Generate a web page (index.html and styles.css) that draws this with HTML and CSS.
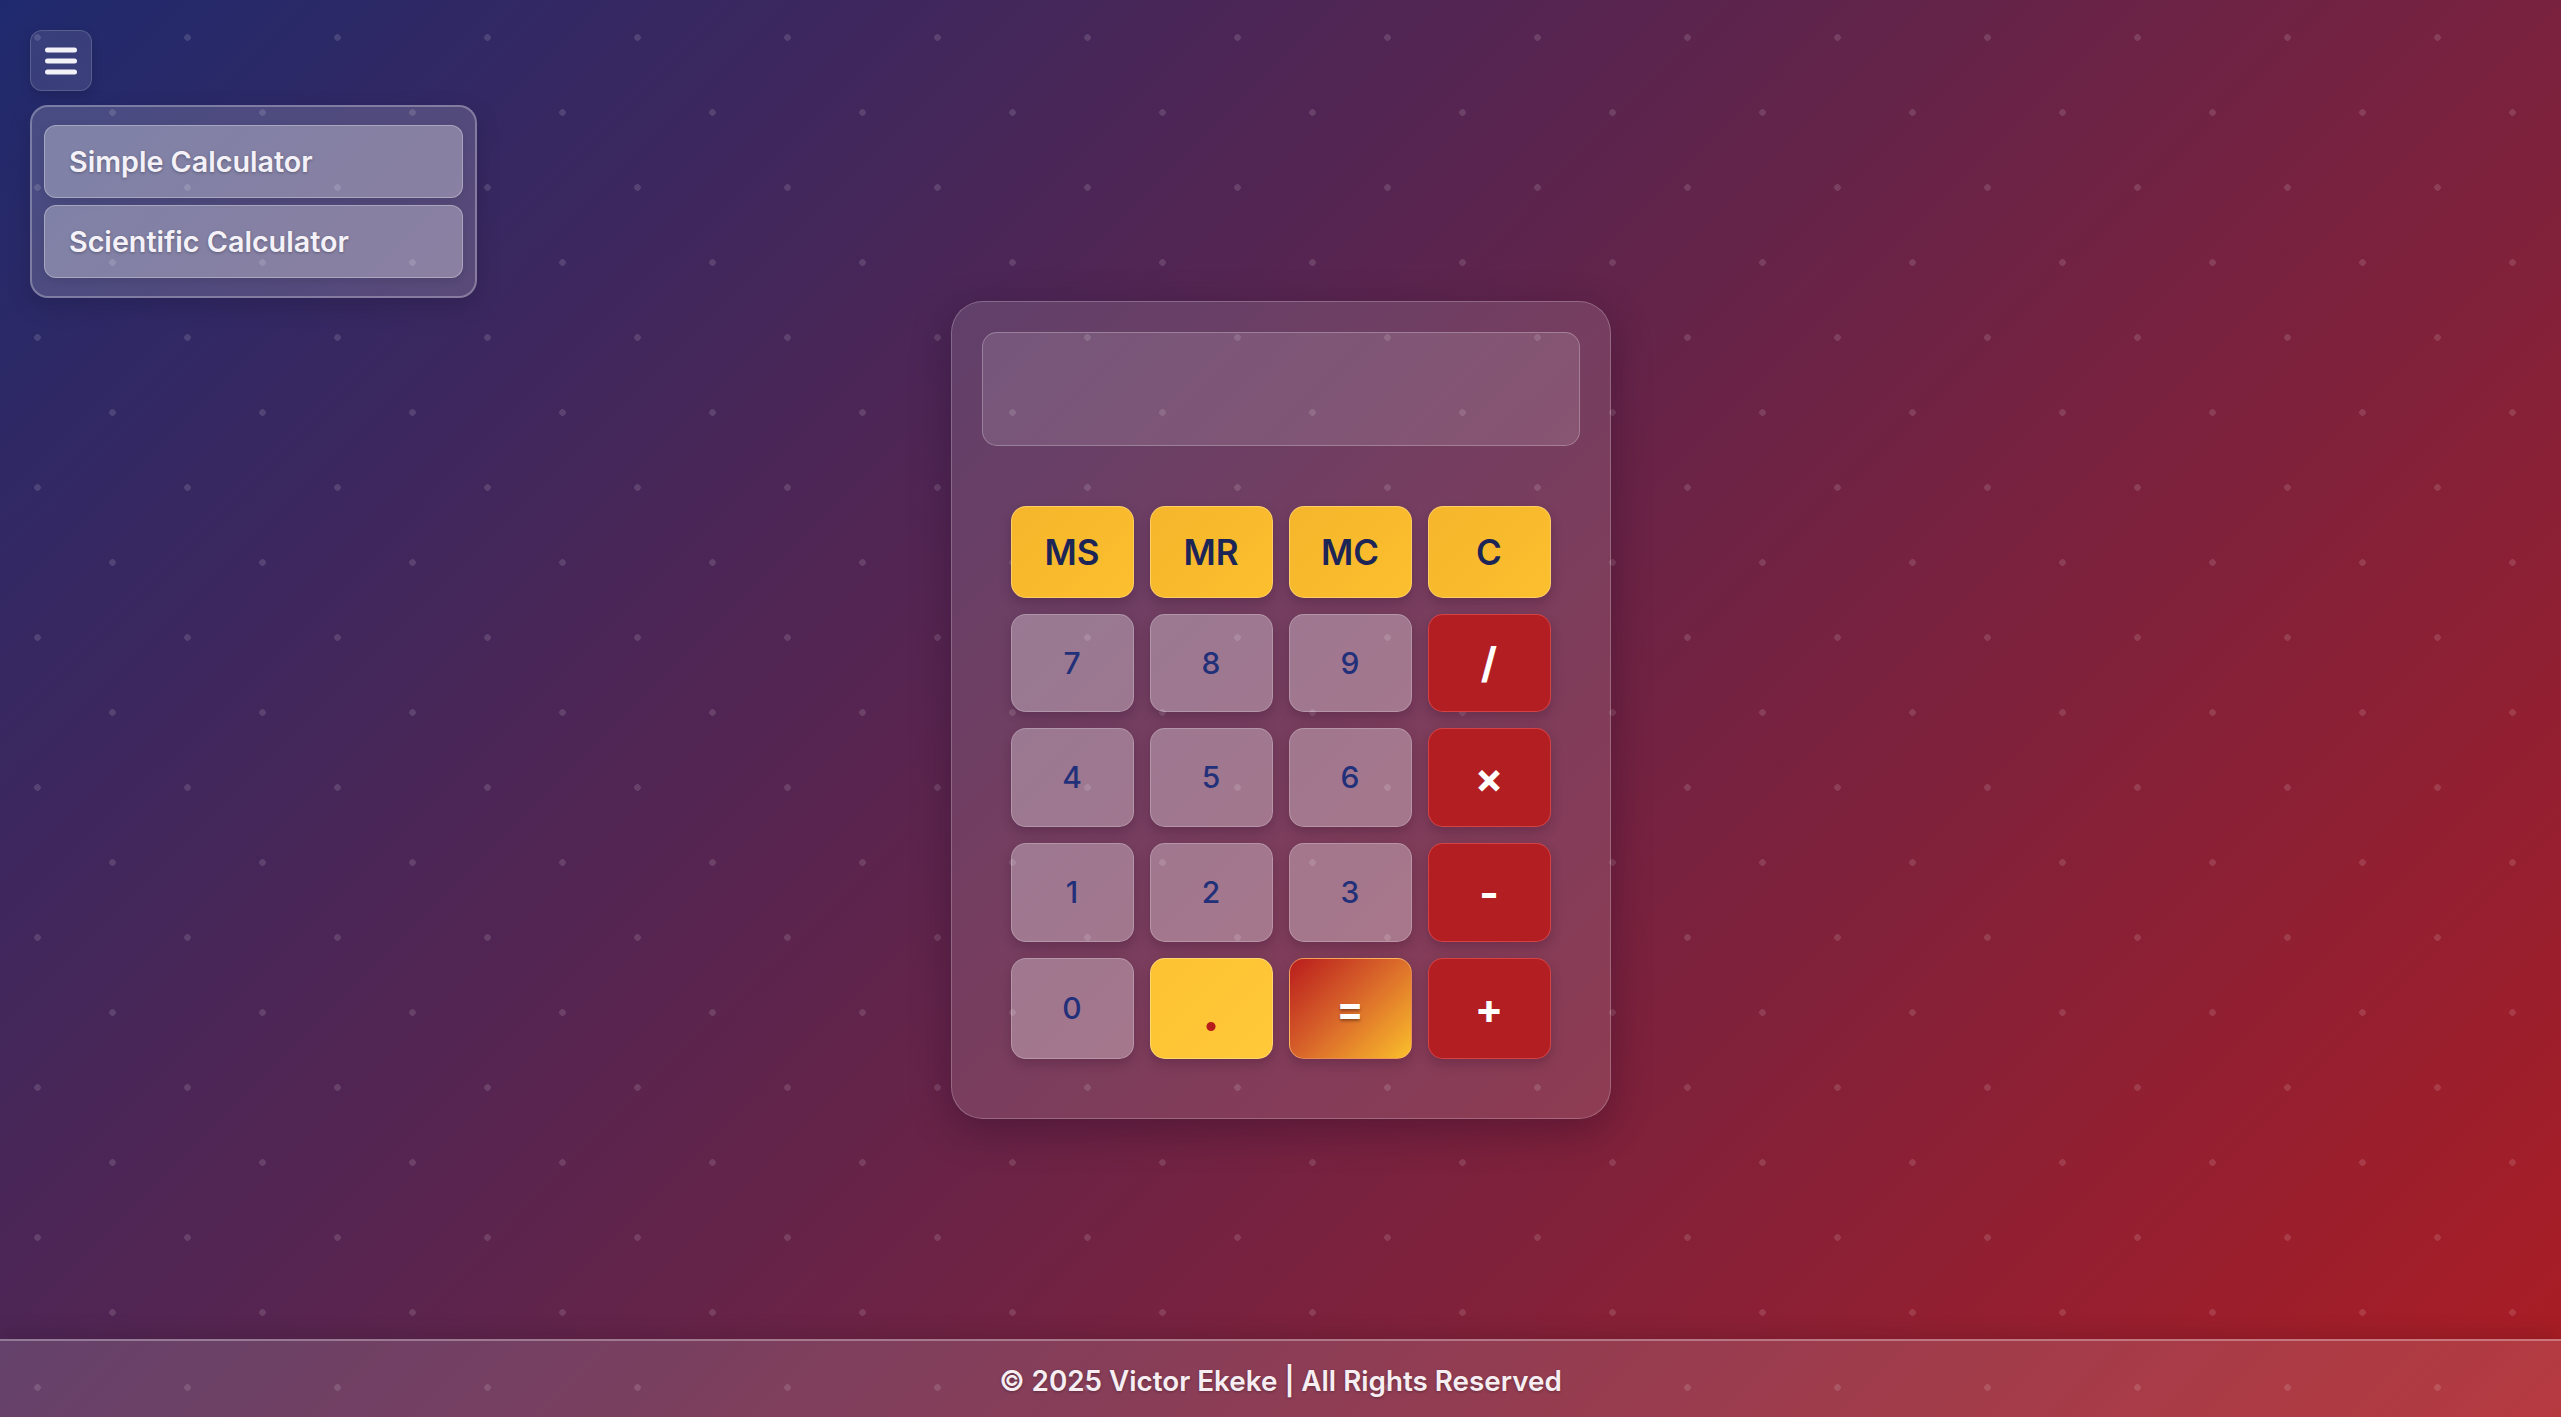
FILE: index.html
```html
<!DOCTYPE html>
<html lang="en">
<head>
<meta charset="utf-8">
<title>Simple Calculator</title>
<link rel="stylesheet" href="styles.css">
</head>
<body>
<nav class="nav">
  <button class="menu-toggle" aria-label="Menu">
    <svg class="bars" width="32" height="28" viewBox="0 0 32 28">
      <rect x="0" y="0.5" width="32" height="5" rx="2.5"/>
      <rect x="0" y="11.5" width="32" height="5" rx="2.5"/>
      <rect x="0" y="22.5" width="32" height="5" rx="2.5"/>
    </svg>
  </button>
  <div class="menu">
    <a class="menu-item">Simple Calculator</a>
    <a class="menu-item">Scientific Calculator</a>
  </div>
</nav>
<main class="main">
  <div class="calculator">
    <div class="display"></div>
    <div class="keys">
      <button class="key mem">MS</button>
      <button class="key mem">MR</button>
      <button class="key mem">MC</button>
      <button class="key mem">C</button>
      <button class="key num">7</button>
      <button class="key num">8</button>
      <button class="key num">9</button>
      <button class="key op">/</button>
      <button class="key num">4</button>
      <button class="key num">5</button>
      <button class="key num">6</button>
      <button class="key op">×</button>
      <button class="key num">1</button>
      <button class="key num">2</button>
      <button class="key num">3</button>
      <button class="key op">-</button>
      <button class="key num">0</button>
      <button class="key dot">.</button>
      <button class="key equals">=</button>
      <button class="key op">+</button>
    </div>
  </div>
</main>
<footer class="footer">© 2025 Victor Ekeke | All Rights Reserved</footer>
</body>
</html>
```
FILE: styles.css
```css
* { box-sizing: border-box; }
html, body { margin: 0; padding: 0; }
body {
  height: 100vh;
  display: flex;
  flex-direction: column;
  font-family: Inter, "Noto Sans", "Liberation Sans", sans-serif;
  background-color: #5a2450;
  background-image:
    radial-gradient(circle at 25% 25%, rgba(255,255,255,0.13) 3px, transparent 3.6px),
    radial-gradient(circle at 75% 75%, rgba(255,255,255,0.13) 3px, transparent 3.6px),
    linear-gradient(135deg, #1f2a6e 0%, #ab1d24 100%);
  background-size: 150px 150px, 150px 150px, 100% 100%;
  overflow: hidden;
  position: relative;
}

.nav {
  position: absolute;
  top: 30px;
  left: 30px;
  display: flex;
  flex-direction: column;
  gap: 14px;
  z-index: 5;
}
.menu-toggle {
  width: 62px;
  height: 61px;
  border-radius: 12px;
  background: rgba(255,255,255,0.1);
  border: 1px solid rgba(255,255,255,0.16);
  box-shadow: 0 4px 12px rgba(0,0,0,0.15);
  display: flex;
  align-items: center;
  justify-content: center;
  padding: 0;
}
.bars rect { fill: #f3f1f8; }
.menu {
  width: 447px;
  padding: 18px 12px;
  display: flex;
  flex-direction: column;
  gap: 7px;
  border-radius: 18px;
  background: rgba(255,255,255,0.16);
  border: 2px solid rgba(255,255,255,0.28);
  box-shadow: 0 8px 24px rgba(0,0,0,0.15);
}
.menu-item {
  height: 73px;
  display: flex;
  align-items: center;
  padding-left: 24px;
  border-radius: 12px;
  background: rgba(255,255,255,0.3);
  border: 1px solid rgba(255,255,255,0.3);
  color: #f4f2f8;
  font-size: 28.7px;
  font-weight: 600;
  text-shadow: 0 1px 3px rgba(0,0,0,0.3);
  box-shadow: 0 3px 8px rgba(0,0,0,0.1);
}

.main {
  flex: 1;
  display: flex;
  align-items: center;
  justify-content: center;
  padding-top: 80px;
}
.calculator {
  width: 660px;
  padding: 30px 30px 29px;
  border-radius: 32px;
  background: rgba(255,255,255,0.12);
  border: 1px solid rgba(255,255,255,0.22);
  box-shadow: 0 12px 40px rgba(20,0,30,0.3);
}
.display {
  height: 114px;
  border-radius: 15px;
  background: rgba(255,255,255,0.12);
  border: 1px solid rgba(255,255,255,0.25);
}
.keys {
  margin-top: 30px;
  padding: 30px 29px;
  display: grid;
  grid-template-columns: repeat(4, 1fr);
  grid-template-rows: 92px 98px 99px 99px 101px;
  gap: 16px;
}
.key {
  border-radius: 15px;
  font-family: Inter, "Noto Sans", "Liberation Sans", sans-serif;
  display: flex;
  align-items: center;
  justify-content: center;
  padding: 0;
  box-shadow: 0 5px 12px rgba(30,0,30,0.22);
}
.mem {
  background: linear-gradient(135deg, #f5b62c, #fcbf2e);
  border: 1px solid rgba(255,220,140,0.6);
  color: #1d2556;
  font-size: 35px;
  font-weight: 600;
}
.num {
  background: rgba(255,255,255,0.3);
  border: 1px solid rgba(255,255,255,0.22);
  color: #22307a;
  font-size: 30px;
  font-weight: 500;
}
.op {
  background: #b21e22;
  border: 1px solid rgba(255,110,110,0.45);
  color: #ffffff;
  font-size: 42px;
  font-weight: 700;
}
.dot {
  background: linear-gradient(135deg, #fdc231, #ffc93a);
  border: 1px solid rgba(255,230,150,0.6);
  color: #b71c1c;
  font-size: 54px;
  font-weight: 700;
  padding-top: 6px;
}
.equals {
  background: linear-gradient(135deg, #b91c1c 0%, #d7612a 45%, #fbbf2c 100%);
  border: 1px solid rgba(255,190,120,0.6);
  color: #ffffff;
  font-size: 40px;
  font-weight: 700;
  text-shadow: 0 2px 3px rgba(0,0,0,0.35);
}

.footer {
  height: 78px;
  flex: none;
  display: flex;
  align-items: center;
  justify-content: center;
  padding-top: 3px;
  background: rgba(255,255,255,0.13);
  border-top: 2px solid rgba(255,255,255,0.3);
  box-shadow: 0 -6px 20px rgba(0,0,0,0.12);
  color: #f6eef2;
  font-size: 27.8px;
  font-weight: 600;
  text-shadow: 0 1px 3px rgba(0,0,0,0.3);
}
```
